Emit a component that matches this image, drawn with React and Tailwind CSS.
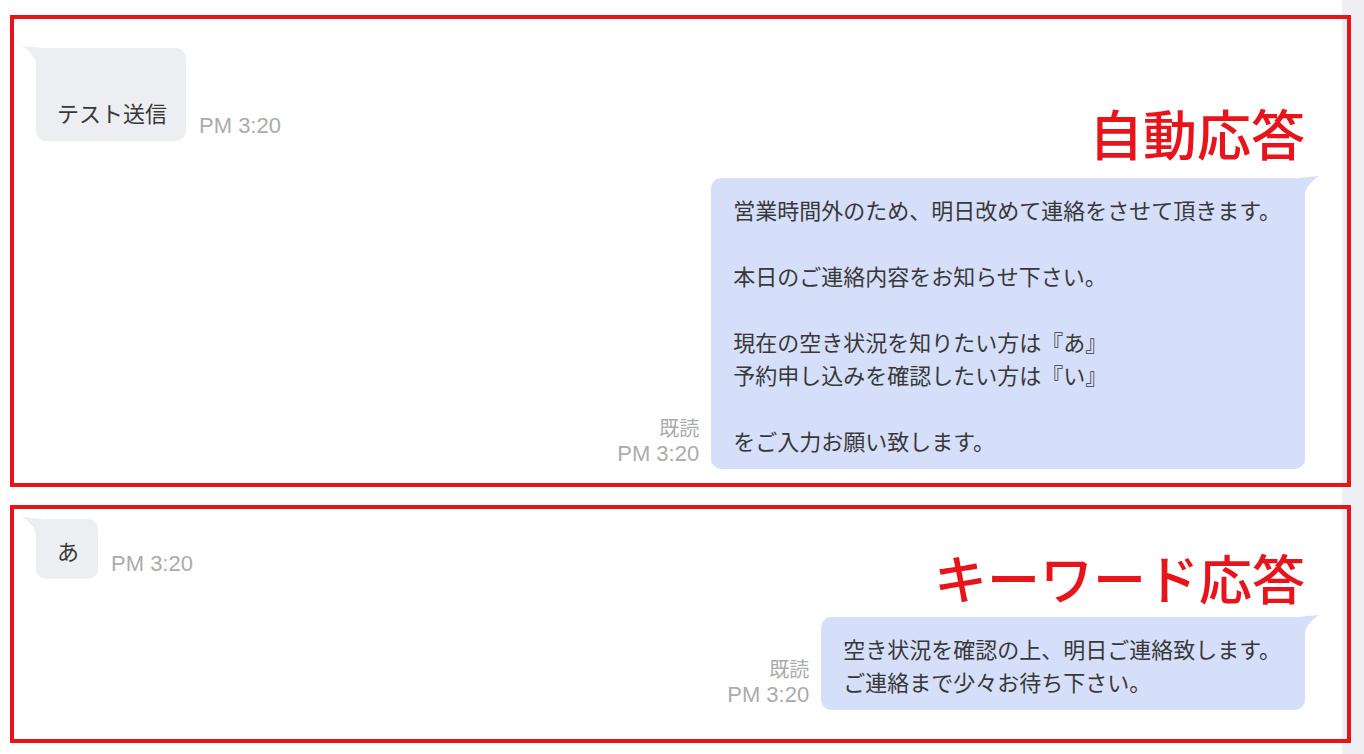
const JP = { fontFamily: '"Noto Sans CJK JP", "Noto Sans", sans-serif' };
const LATIN = { fontFamily: '"Liberation Sans", Arial, sans-serif' };

const TailLeft = () => (
  <svg
    className="absolute -left-[17px] -top-[4px]"
    width="24"
    height="22"
    viewBox="0 0 24 22"
  >
    <path d="M24 4 L3 2 Q13 8 17 18 L24 18 Z" fill="#eceef2" />
  </svg>
);

const TailRight = () => (
  <svg
    className="absolute -right-[17px] -top-[4px]"
    width="24"
    height="22"
    viewBox="0 0 24 22"
  >
    <path d="M0 4 L21 2 Q11 8 7 18 L0 18 Z" fill="#d6dff9" />
  </svg>
);

const Lines = ({ lines }) =>
  lines.map((line, i) => (
    <div key={i} className="h-[33px] whitespace-nowrap">
      {line || '\u00a0'}
    </div>
  ));

const Incoming = ({ lines }) => (
  <div className="flex items-end">
    <div className="relative rounded-[10px] bg-[#eceef2] pl-[21px] pr-[19px] pt-[14.5px] pb-[12.5px] text-[22px] leading-[33px] text-[#383838]">
      <TailLeft />
      <div className="relative">
        <Lines lines={lines} />
      </div>
    </div>
    <span
      className="mb-[2px] ml-[13px] text-[22px] leading-[26px] text-[#ababab]"
      style={LATIN}
    >
      PM 3:20
    </span>
  </div>
);

const Outgoing = ({ lines }) => (
  <div className="flex items-end justify-end">
    <div className="mb-[2px] mr-[12px] flex flex-col items-end text-[#ababab]">
      <span className="text-[20px] leading-[26px]">既読</span>
      <span className="text-[22px] leading-[26px]" style={LATIN}>
        PM 3:20
      </span>
    </div>
    <div className="relative rounded-[10px] bg-[#d6dff9] pl-[22px] pr-[24px] pt-[14.5px] pb-[12.5px] text-[22px] leading-[33px] text-[#383838]">
      <TailRight />
      <div className="relative">
        <Lines lines={lines} />
      </div>
    </div>
  </div>
);

export default function App() {
  return (
    <div
      className="h-[754px] w-[1364px] overflow-hidden bg-[linear-gradient(to_right,#ffffff_1342px,#eeeef3_1342px)] pt-[15px]"
      style={JP}
    >
      {/* 自動応答 */}
      <section className="ml-[10px] h-[472px] w-[1341px] border-[4px] border-[#e8141c] pl-[22px] pr-[42px] pt-[29px]">
        <div className="flex items-start justify-between">
          <Incoming lines={['', 'テスト送信']} />
          <h2 className="mt-[58px] text-[54px] font-medium leading-none text-[#e8141c]">自動応答</h2>
        </div>
        <div className="mt-[18px]">
          <Outgoing
            lines={[
              '営業時間外のため、明日改めて連絡をさせて頂きます。',
              '',
              '本日のご連絡内容をお知らせ下さい。',
              '',
              '現在の空き状況を知りたい方は『あ』',
              '予約申し込みを確認したい方は『い』',
              '',
              'をご入力お願い致します。',
            ]}
          />
        </div>
      </section>

      {/* キーワード応答 */}
      <section className="ml-[10px] mt-[18px] h-[238px] w-[1341px] border-[4px] border-[#e8141c] pl-[22px] pr-[42px] pt-[10px]">
        <div className="flex items-start justify-between">
          <Incoming lines={['あ']} />
          <h2 className="mt-[32px] text-[53px] font-medium leading-none text-[#e8141c]">キーワード応答</h2>
        </div>
        <div className="mt-[13px]">
          <Outgoing
            lines={['空き状況を確認の上、明日ご連絡致します。', 'ご連絡まで少々お待ち下さい。']}
          />
        </div>
      </section>
    </div>
  );
}
